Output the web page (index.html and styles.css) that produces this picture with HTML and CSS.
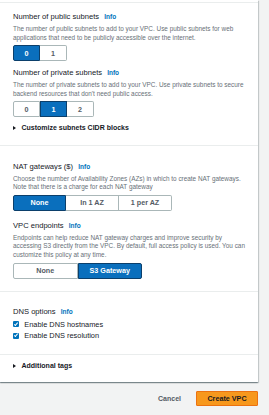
FILE: index.html
```html
<!DOCTYPE html>
<html lang="en">
<head>
    <meta charset="UTF-8">
    <meta name="viewport" content="width=device-width, initial-scale=1.0">
    <title>Create VPC</title>
    <link rel="stylesheet" href="styles.css">
</head>
<body>

    <div class="page">
        <div class="card">

            <!-- Subnets -->
            <div class="section section-subnets">
                <div class="field">
                    <div class="label">Number of public subnets <a class="info" href="#">Info</a></div>
                    <div class="desc">The number of public subnets to add to your VPC. Use public subnets for web applications that need to be publicly accessible over the internet.</div>
                    <div class="seg seg-sm">
                        <button class="selected">0</button>
                        <button>1</button>
                    </div>
                </div>

                <div class="field">
                    <div class="label">Number of private subnets <a class="info" href="#">Info</a></div>
                    <div class="desc">The number of private subnets to add to your VPC. Use private subnets to secure backend resources that don't need public access.</div>
                    <div class="seg seg-sm">
                        <button>0</button>
                        <button class="selected">1</button>
                        <button>2</button>
                    </div>
                </div>

                <div class="expander">Customize subnets CIDR blocks</div>
            </div>

            <!-- Gateways and endpoints -->
            <div class="section section-gateways">
                <div class="field">
                    <div class="label">NAT gateways ($) <a class="info" href="#">Info</a></div>
                    <div class="desc">Choose the number of Availability Zones (AZs) in which to create NAT gateways. Note that there is a charge for each NAT gateway</div>
                    <div class="seg seg-md">
                        <button class="selected">None</button>
                        <button>In 1 AZ</button>
                        <button>1 per AZ</button>
                    </div>
                </div>

                <div class="field">
                    <div class="label">VPC endpoints <a class="info" href="#">Info</a></div>
                    <div class="desc">Endpoints can help reduce NAT gateway charges and improve security by accessing S3 directly from the VPC. By default, full access policy is used. You can customize this policy at any time.</div>
                    <div class="seg seg-lg">
                        <button>None</button>
                        <button class="selected">S3 Gateway</button>
                    </div>
                </div>
            </div>

            <!-- DNS -->
            <div class="section section-dns">
                <div class="label">DNS options <a class="info" href="#">Info</a></div>
                <label class="check"><span class="box"></span>Enable DNS hostnames</label>
                <label class="check"><span class="box"></span>Enable DNS resolution</label>
            </div>

            <!-- Tags -->
            <div class="section section-tags">
                <div class="expander">Additional tags</div>
            </div>

        </div>

        <div class="actions">
            <button class="btn-link">Cancel</button>
            <button class="btn-primary">Create VPC</button>
        </div>
    </div>

</body>
</html>
```

FILE: styles.css
```css
body {
    margin: 0;
    background-color: #f2f3f3;
    font-family: "Liberation Sans", Arial, sans-serif;
    color: #16191f;
}
.page {
    width: 258px;
}
.card {
    background-color: #fff;
    padding-top: 2px;
    box-shadow: 0 1px 1px 0 rgba(0, 28, 36, 0.3), 1px 1px 1px 0 rgba(0, 28, 36, 0.15), -1px 1px 1px 0 rgba(0, 28, 36, 0.15);
}
.section {
    border-top: 1px solid #eaeded;
    padding: 0 13px;
}
.section-subnets {
    padding-top: 9px;
    padding-bottom: 11.6px;
}
.section-gateways {
    padding-top: 15.7px;
    padding-bottom: 12.5px;
}
.section-dns {
    padding-top: 14.7px;
    padding-bottom: 12.4px;
}
.section-tags {
    padding-top: 5.7px;
    padding-bottom: 11.3px;
}
.field + .field {
    margin-top: 7px;
}
.section-gateways .field + .field {
    margin-top: 10px;
}
.label {
    font-size: 7.6px;
    line-height: 10px;
}
.info {
    margin-left: 3px;
    font-size: 6.5px;
    font-weight: bold;
    color: #0073bb;
    text-decoration: none;
}
.desc {
    margin-top: 3px;
    font-size: 6.4px;
    line-height: 8.6px;
    color: #687078;
}
.seg {
    display: flex;
    margin-top: 3px;
}
.seg button {
    height: 16px;
    padding: 0;
    margin: 0;
    background-color: #fff;
    border: 1px solid #aab7b8;
    border-left-width: 0;
    font-family: inherit;
    font-size: 7.2px;
    font-weight: bold;
    color: #545b64;
}
.seg button:first-child {
    border-left-width: 1px;
    border-radius: 2px 0 0 2px;
}
.seg button:last-child {
    border-radius: 0 2px 2px 0;
}
.seg button.selected {
    background-color: #0a6fbd;
    border-color: #0b3f6b;
    border-left-width: 1px;
    color: #fff;
}
.seg button.selected + button {
    border-left-width: 0;
}
.seg-sm button {
    width: 27px;
}
.seg-md button {
    width: 53px;
}
.seg-lg button {
    width: 64.5px;
}
.expander {
    display: flex;
    align-items: center;
    margin-top: 6px;
    font-size: 7px;
    font-weight: bold;
    line-height: 10px;
    color: #16191f;
}
.section-tags .expander {
    margin-top: 0;
}
.expander::before {
    content: "";
    width: 0;
    height: 0;
    margin-right: 5.5px;
    border-top: 2.6px solid transparent;
    border-bottom: 2.6px solid transparent;
    border-left: 3.5px solid #16191f;
}
.check {
    display: flex;
    align-items: center;
    height: 11.7px;
    font-size: 7.4px;
    color: #16191f;
}
.section-dns .label {
    margin-bottom: 1.5px;
}
.box {
    position: relative;
    width: 5.6px;
    height: 5.6px;
    margin-right: 5.7px;
    background-color: #0073bb;
    border-radius: 1px;
}
.box::after {
    content: "";
    position: absolute;
    left: 1.9px;
    top: 0.4px;
    width: 1.3px;
    height: 2.9px;
    border-right: 1px solid #fff;
    border-bottom: 1px solid #fff;
    transform: rotate(40deg);
}
.actions {
    display: flex;
    justify-content: flex-end;
    align-items: center;
    margin-top: 9px;
}
.btn-link {
    padding: 0 8px;
    margin-right: 7px;
    background: none;
    border: none;
    font-family: inherit;
    font-size: 7px;
    font-weight: bold;
    color: #545b64;
}
.btn-primary {
    width: 62px;
    height: 15px;
    padding: 0;
    background-color: #f7981d;
    border: 1px solid #ec7211;
    border-radius: 1px;
    font-family: inherit;
    font-size: 7.2px;
    font-weight: bold;
    color: #16191f;
}
```
